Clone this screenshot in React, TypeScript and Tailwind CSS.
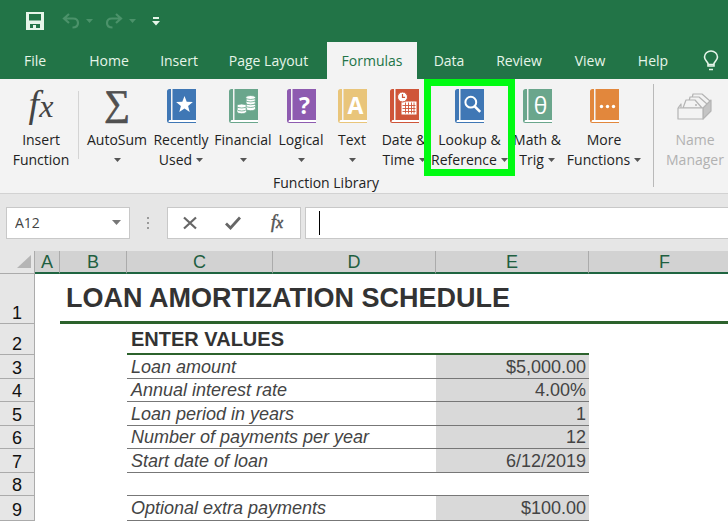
import type { ReactNode } from "react"
import { clsx } from "clsx"

const tabs = [
  { label: "File", width: "w-[70px]" },
  { label: "Home", width: "w-[78px]" },
  { label: "Insert", width: "w-[62px]" },
  { label: "Page Layout", width: "w-[117px]" },
  { label: "Formulas", width: "w-[90px]" },
  { label: "Data", width: "w-16" },
  { label: "Review", width: "w-[76px]" },
  { label: "View", width: "w-[66px]" },
  { label: "Help", width: "w-[60px]" },
]

const columns = [
  { name: "A", width: "w-[25px]" },
  { name: "B", width: "w-[67px]" },
  { name: "C", width: "w-[146px]" },
  { name: "D", width: "w-[163px]" },
  { name: "E", width: "w-[153px]" },
  { name: "F", width: "" },
]

const loanRows = [
  { row: 3, label: "Loan amount", value: "$5,000.00", height: "h-6" },
  { row: 4, label: "Annual interest rate", value: "4.00%", height: "h-[23px]" },
  { row: 5, label: "Loan period in years", value: "1", height: "h-6" },
  { row: 6, label: "Number of payments per year", value: "12", height: "h-[23px]" },
  { row: 7, label: "Start date of loan", value: "6/12/2019", height: "h-6" },
  { row: 8, label: "", value: "", height: "h-[23px]" },
  { row: 9, label: "Optional extra payments", value: "$100.00", height: "h-[25px]" },
]

function Caret({ className }: { className?: string }) {
  return (
    <svg viewBox="0 0 7 4" className={clsx("h-1 w-[7px] shrink-0", className)} fill="currentColor" aria-hidden="true">
      <path d="M0 0h7L3.5 4z" />
    </svg>
  )
}

function Book({ color, children }: { color: string; children: ReactNode }) {
  return (
    <svg viewBox="0 0 29 34" className="h-[34px] w-[29px] overflow-visible" aria-hidden="true">
      <path d="M2.500 0H4v31H2.600L1.800 33H29v1H2.500Q0 34 0 31.500V2.500Q0 0 2.500 0z" fill={color} />
      <path d="M1.500 32.500Q1.500 31 3 31H29v2H2z" fill="#fff" />
      <path d="M5.500 0H29v31H5.500z" fill={color} />
      {children}
    </svg>
  )
}

function SigmaIcon() {
  return (
    <svg viewBox="0 0 32 40" className="h-10 w-8 overflow-visible" aria-hidden="true">
      <text x="16" y="26" textAnchor="middle" fontSize="36" fill="#505050" stroke="#505050" strokeWidth="0.8" fontFamily="Liberation Serif, serif">
        ∑
      </text>
    </svg>
  )
}

function FxIcon() {
  return (
    <svg viewBox="0 0 32 40" className="h-10 w-8 overflow-visible" aria-hidden="true">
      <text x="16" y="28" textAnchor="middle" fontSize="38" fontStyle="italic" fill="#444" fontFamily="Liberation Serif, serif">
        f<tspan fontSize="32">x</tspan>
      </text>
    </svg>
  )
}

function StarBook() {
  return (
    <Book color="#3f77b5">
      <path d="M17.500 7l2.200 5.800 6.200.3-4.800 3.900 1.600 6-5.200-3.400-5.200 3.400 1.600-6-4.800-3.900 6.200-.3z" fill="#fff" />
    </Book>
  )
}

function CoinsBook() {
  return (
    <Book color="#6aa68c">
      <g fill="#fff" stroke="#6aa68c" strokeWidth="0.8">
        <path d="M17 16v3.500c0 3 9.500 3 9.500 0V16z" />
        <ellipse cx="21.700" cy="16.500" rx="4.800" ry="2" />
        <ellipse cx="21.700" cy="13.800" rx="4.800" ry="2" />
        <ellipse cx="21.700" cy="11" rx="4.800" ry="2" />
        <ellipse cx="21.700" cy="8.500" rx="4.800" ry="2" />
        <path d="M8 19v3.500c0 3 9.500 3 9.500 0V19z" />
        <ellipse cx="12.700" cy="20" rx="4.800" ry="2" />
        <ellipse cx="12.700" cy="17" rx="4.800" ry="2" />
      </g>
    </Book>
  )
}

function GlyphBook({ color, glyph, bold = true }: { color: string; glyph: string; bold?: boolean }) {
  return (
    <Book color={color}>
      <text
        x="17.500"
        y="25"
        textAnchor="middle"
        fontSize="23"
        fontWeight={bold ? 700 : 400}
        fill="#fff"
        fontFamily="Open Sans, sans-serif"
      >
        {glyph}
      </text>
    </Book>
  )
}

function CalendarBook() {
  return (
    <Book color="#cf5539">
      <rect x="11.500" y="12.500" width="15" height="13" fill="#fff" />
      <path d="M12.500 16.500h13M12.500 19.500h13M12.500 22.500h13M15.500 13.500v11M18.500 13.500v11M21.500 13.500v11M24 13.500v11" stroke="#cf5539" strokeWidth="0.9" />
      <circle cx="12.500" cy="8" r="5" fill="#fff" stroke="#cf5539" />
      <path d="M12.500 5v3.300h2.600" fill="none" stroke="#cf5539" strokeWidth="1.200" />
    </Book>
  )
}

function SearchBook() {
  return (
    <Book color="#3f77b5">
      <circle cx="15.800" cy="13.200" r="5.400" fill="none" stroke="#fff" strokeWidth="2" />
      <path d="M19.700 17.300l5.500 5.500" stroke="#fff" strokeWidth="2.600" />
    </Book>
  )
}

function DotsBook() {
  return (
    <Book color="#e2873c">
      <g fill="#fff">
        <circle cx="11.500" cy="17.500" r="1.700" />
        <circle cx="17.500" cy="17.500" r="1.700" />
        <circle cx="23.500" cy="17.500" r="1.700" />
      </g>
    </Book>
  )
}

function CardBoxIcon() {
  return (
    <svg viewBox="0 0 36 34" className="h-[34px] w-9" fill="#f3f3f3" stroke="#b4b4b4" strokeWidth="1.200" strokeLinejoin="round" aria-hidden="true">
      <path d="M14 14l2-9h9l8 7v9l-5 5z" />
      <path d="M11 17l2-9h9l8 7v8l-4 4z" />
      <path d="M6 19l3-8h9l7 8z" />
      <path d="M26 30l8-8V11l-8 8z" fill="#c4c4c4" />
      <path d="M1 19l3-4v4M1 19h25v11H1z" />
      <circle cx="19" cy="16" r="1" fill="#b4b4b4" stroke="none" />
    </svg>
  )
}

interface RibbonButtonProps {
  lines: [string, string]
  width: string
  icon: ReactNode
  menu?: boolean
  disabled?: boolean
  highlighted?: boolean
}

function RibbonButton({ lines, width, icon, menu = true, disabled = false, highlighted = false }: RibbonButtonProps) {
  return (
    <button
      type="button"
      disabled={disabled}
      className={clsx(
        "relative flex shrink-0 flex-col items-center whitespace-nowrap leading-5",
        disabled ? "text-[#b1b1b1]" : "text-[#222]",
        width
      )}
    >
      <span className="flex h-[43px] items-start justify-center pt-0.5">{icon}</span>
      <span>{lines[0]}</span>
      <span className="flex h-5 items-center gap-1">
        {lines[1]}
        {menu && <Caret className="text-[#555]" />}
      </span>
      {highlighted && <span className="absolute -inset-x-[7px] -top-2 -bottom-1.5 z-10 border-[7px] border-[#00fb12]" />}
    </button>
  )
}

function TitleBar() {
  return (
    <div className="flex h-[42px] items-center pl-[26px] text-[#e6f5e9]">
      <button type="button" aria-label="Save">
        <svg viewBox="0 0 18 18" className="h-[18px] w-[18px]" aria-hidden="true">
          <path d="M0 0h18v18H0zM3 2v6.500h12V2zM4 12v4h3v-3h3v3h4v-4z" fill="currentColor" fillRule="evenodd" />
        </svg>
      </button>
      <button type="button" aria-label="Undo" className="ml-[18px] flex items-center gap-1.5 text-[#4b926a]">
        <svg viewBox="0 0 18 16" className="h-4 w-[18px]" fill="none" stroke="currentColor" strokeWidth="2.200" aria-hidden="true">
          <path d="M7 1L2 5.500 7 10M2.500 5.500H11c3.500 0 5 2 5 4.500s-2 4.500-5.500 4.500" />
        </svg>
        <Caret />
      </button>
      <button type="button" aria-label="Redo" className="ml-3 flex items-center gap-1.5 text-[#4b926a]">
        <svg viewBox="0 0 18 16" className="h-4 w-[18px]" fill="none" stroke="currentColor" strokeWidth="2.200" aria-hidden="true">
          <path d="M11 1l5 4.500-5 4.500M15.500 5.500H7c-3.500 0-5 2-5 4.500s2 4.500 5.500 4.500" />
        </svg>
        <Caret />
      </button>
      <button type="button" aria-label="Customize Quick Access Toolbar" className="ml-4">
        <svg viewBox="0 0 8 9" className="h-[9px] w-2" fill="currentColor" aria-hidden="true">
          <path d="M1 0h6v2H1zM0 4h8L4 8.500z" />
        </svg>
      </button>
    </div>
  )
}

function TabStrip() {
  return (
    <div role="tablist" className="flex h-[37px] items-stretch">
      {tabs.map(({ label, width }) => {
        const active = label === "Formulas"
        return (
          <button
            key={label}
            type="button"
            role="tab"
            aria-selected={active}
            className={clsx(
              "shrink-0 whitespace-nowrap text-center",
              active ? "bg-[#f3f3f3] text-[#227447]" : "text-[#e6f5e9]",
              width
            )}
          >
            {label}
          </button>
        )
      })}
      <button type="button" aria-label="Tell me what you want to do" className="flex w-14 shrink-0 items-center justify-center text-[#e6f5e9]">
        <svg viewBox="0 0 16 22" className="h-[22px] w-4" fill="none" stroke="currentColor" strokeWidth="1.600" aria-hidden="true">
          <path d="M5 16v-2.500C4.500 11.500 1.500 10 1.500 7a6.500 6 0 0 1 13 0c0 3-3 4.500-3.500 6.500V16z" />
          <path d="M5 14.500h6M6 19.500h4" />
        </svg>
      </button>
    </div>
  )
}

function Ribbon() {
  return (
    <div className="flex h-[115px] items-start border-b border-[#d2d2d2] bg-[#f3f3f3]">
      <div className="flex h-full flex-col">
        <div className="flex pt-2">
          <RibbonButton lines={["Insert", "Function"]} width="w-[78px] pl-1" icon={<FxIcon />} menu={false} />
          <div className="mt-1 mr-1 h-[68px] w-px shrink-0 bg-[#d4d4d4]" />
          <RibbonButton lines={["AutoSum", ""]} width="w-[68px]" icon={<SigmaIcon />} />
          <RibbonButton lines={["Recently", "Used"]} width="w-[60px]" icon={<StarBook />} />
          <RibbonButton lines={["Financial", ""]} width="w-16" icon={<CoinsBook />} />
          <RibbonButton lines={["Logical", ""]} width="w-[52px]" icon={<GlyphBook color="#8e5bb0" glyph="?" />} />
          <RibbonButton lines={["Text", ""]} width="w-[50px]" icon={<GlyphBook color="#e9c57a" glyph="A" />} />
          <RibbonButton lines={["Date &", "Time"]} width="w-[54px]" icon={<CalendarBook />} />
          <RibbonButton lines={["Lookup &", "Reference"]} width="w-[77px]" icon={<SearchBook />} highlighted />
          <RibbonButton lines={["Math &", "Trig"]} width="w-[58px]" icon={<GlyphBook color="#6aa68c" glyph="θ" bold={false} />} />
          <RibbonButton lines={["More", "Functions"]} width="w-[76px]" icon={<DotsBook />} />
        </div>
        <p className="mt-[3px] pl-2.5 text-center leading-5 text-[#222]">Function Library</p>
      </div>
      <div className="mt-[5px] ml-[11px] h-[103px] w-px shrink-0 bg-[#b9b9b9]" />
      <div className="flex pt-2 pl-1">
        <RibbonButton lines={["Name", "Manager"]} width="w-[74px]" icon={<CardBoxIcon />} menu={false} disabled />
      </div>
    </div>
  )
}

function FormulaBar() {
  return (
    <div className="flex h-[57px] items-center bg-[#e6e6e6] pl-1.5 text-[#444]">
      <div className="flex h-8 w-[124px] shrink-0 items-center border border-[#c8c8c8] bg-white px-2">
        <input aria-label="Name box" defaultValue="A12" className="w-full min-w-0 bg-transparent outline-none" />
        <button type="button" aria-label="Show names">
          <svg viewBox="0 0 9 5" className="h-[5px] w-[9px]" fill="#777" aria-hidden="true">
            <path d="M0 0h9L4.500 5z" />
          </svg>
        </button>
      </div>
      <svg viewBox="0 0 3 14" className="mx-[17px] h-3.5 w-[3px] shrink-0" fill="#9a9a9a" aria-hidden="true">
        <path d="M0 1h2v2H0zM0 6h2v2H0zM0 11h2v2H0z" />
      </svg>
      <div className="flex h-8 w-[134px] shrink-0 items-center justify-between border border-[#c8c8c8] bg-white px-3.5 text-[#666]">
        <button type="button" aria-label="Cancel">
          <svg viewBox="0 0 16 14" className="h-3.5 w-4" fill="none" stroke="currentColor" strokeWidth="2.200" aria-hidden="true">
            <path d="M2 1.500l12 11M14 1.500l-12 11" />
          </svg>
        </button>
        <button type="button" aria-label="Enter">
          <svg viewBox="0 0 16 14" className="h-3.5 w-4" fill="none" stroke="currentColor" strokeWidth="2.800" aria-hidden="true">
            <path d="M1 7.500l4.500 4.500L15 1.500" />
          </svg>
        </button>
        <button type="button" aria-label="Insert function">
          <svg viewBox="0 0 18 22" className="h-[22px] w-[18px] overflow-visible" aria-hidden="true">
            <text x="9" y="16" textAnchor="middle" fontSize="18" fontStyle="italic" fill="#555" stroke="#555" strokeWidth="0.5" fontFamily="Liberation Serif, serif">
              f<tspan fontSize="16">x</tspan>
            </text>
          </svg>
        </button>
      </div>
      <div className="ml-1 flex h-8 min-w-0 flex-1 items-center border-y border-l border-[#c8c8c8] bg-white pl-[13px]">
        <span className="h-6 w-px bg-black" />
        <input aria-label="Formula bar" className="h-full min-w-0 flex-1 bg-transparent outline-none" />
      </div>
    </div>
  )
}

function RowHeader({ row }: { row: number }) {
  return (
    <th scope="row" className="border-r border-b border-[#ababab] bg-[#e6e6e6] p-0 align-bottom text-lg leading-5 font-normal text-[#111]">
      {row}
    </th>
  )
}

function Sheet() {
  return (
    <table className="w-full table-fixed border-separate border-spacing-0 bg-white font-['Liberation_Sans',Arial,sans-serif] text-lg leading-5 text-[#444]">
      <colgroup>
        <col className="w-[35px]" />
        {columns.map(({ name, width }) => (
          <col key={name} className={width} />
        ))}
      </colgroup>
      <thead>
        <tr className="h-[23px]">
          <th aria-label="Select all" className="border-r border-b border-[#ababab] bg-[#e6e6e6] p-0">
            <svg viewBox="0 0 14 14" className="mr-[3px] ml-auto h-3.5 w-3.5" fill="#b5b5b5" aria-hidden="true">
              <path d="M14 0v13H0z" />
            </svg>
          </th>
          {columns.map(({ name }) => (
            <th
              key={name}
              scope="col"
              className="border-r border-b-2 border-r-[#ababab] border-b-[#1f6541] bg-[#d2d2d2] p-0 font-normal text-[#1f5f41] last:border-r-0 last:pl-3"
            >
              {name}
            </th>
          ))}
        </tr>
      </thead>
      <tbody>
        <tr className="h-[50px]">
          <RowHeader row={1} />
          <td className="p-0" />
          <td colSpan={5} className="border-b-[3px] border-[#2c622c] p-0 pl-1.5 text-[27px] leading-8 font-bold whitespace-nowrap text-[#333]">
            LOAN AMORTIZATION SCHEDULE
          </td>
        </tr>
        <tr className="h-[31px]">
          <RowHeader row={2} />
          <td colSpan={2} className="p-0" />
          <td colSpan={3} className="border-b-2 border-[#2c622c] p-0 pl-1 text-xl leading-5 font-bold text-[#333]">
            ENTER VALUES
          </td>
          <td className="p-0" />
        </tr>
        {loanRows.map(({ row, label, value, height }) => (
          <tr key={row} className={height}>
            <RowHeader row={row} />
            <td colSpan={2} className="p-0" />
            <td colSpan={2} className="border-b border-[#777] p-0 pl-1 italic">
              {label}
            </td>
            <td className={clsx("border-b border-[#777] p-0 pr-[3px] text-right", value && "bg-[#d9d9d9]")}>{value}</td>
            <td className="p-0" />
          </tr>
        ))}
      </tbody>
    </table>
  )
}

export default function App() {
  return (
    <main className="overflow-hidden bg-white font-['Open_Sans','Segoe_UI',sans-serif] text-sm">
      <header className="bg-[#227447]">
        <TitleBar />
        <TabStrip />
      </header>
      <Ribbon />
      <FormulaBar />
      <Sheet />
    </main>
  )
}
